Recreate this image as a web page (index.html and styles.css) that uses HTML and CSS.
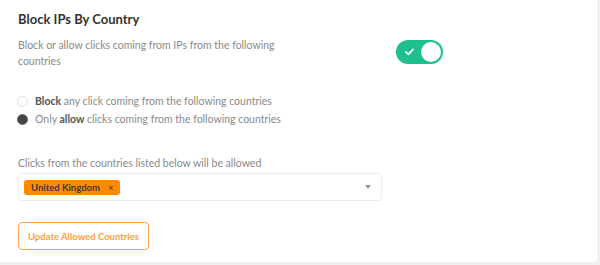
FILE: index.html
```html
<!DOCTYPE html>
<html>
<head>
<meta charset="utf-8">
<link rel="stylesheet" href="styles.css">
</head>
<body>
<div class="card">
  <h2 class="title">Block IPs By Country</h2>
  <div class="top-row">
    <p class="desc">Block or allow clicks coming from IPs from the following countries</p>
    <div class="toggle">
      <svg class="check" width="9" height="8" viewBox="0 0 9 8"><path d="M1 4.2 L3.4 6.4 L8 1.4" fill="none" stroke="#fff" stroke-width="1.8" stroke-linecap="round" stroke-linejoin="round"/></svg>
      <span class="knob"></span>
    </div>
  </div>
  <div class="radios">
    <label class="radio"><span class="dot"></span><span><b>Block</b> any click coming from the following countries</span></label>
    <label class="radio"><span class="dot on"></span><span>Only <b>allow</b> clicks coming from the following countries</span></label>
  </div>
  <div class="field-label">Clicks from the countries listed below will be allowed</div>
  <div class="select">
    <span class="tag">United Kingdom <span class="x">×</span></span>
    <span class="caret"></span>
  </div>
  <button class="btn">Update Allowed Countries</button>
</div>
</body>
</html>
```
FILE: styles.css
```css
html, body {
  margin: 0;
  padding: 0;
}
body {
  background: #f1f1f1;
  font-family: Lato, "Noto Sans", sans-serif;
  width: 600px;
  height: 265px;
  overflow: hidden;
}
.card {
  background: #fff;
  width: 597px;
  height: 262px;
  border-bottom-right-radius: 4px;
  box-sizing: border-box;
  padding: 11px 18px 0 18px;
}
.title {
  margin: 0;
  font-size: 13px;
  font-weight: 700;
  color: #333;
  line-height: 16px;
}
.top-row {
  display: flex;
  align-items: flex-start;
  margin-top: 10px;
}
.desc {
  margin: 0;
  width: 262px;
  font-size: 10.5px;
  line-height: 16px;
  color: #8a8a8a;
}
.toggle {
  margin-left: 116px;
  margin-top: 3px;
  width: 47px;
  height: 24px;
  border-radius: 12px;
  background: #1fc08e;
  box-sizing: border-box;
  display: flex;
  align-items: center;
  padding: 0 2px 0 9px;
}
.check {
  display: block;
}
.knob {
  margin-left: auto;
  width: 20px;
  height: 20px;
  border-radius: 50%;
  background: #fff;
}
.radios {
  margin-top: 26px;
  display: flex;
  flex-direction: column;
  gap: 5px;
}
.radio {
  display: flex;
  align-items: center;
  gap: 7px;
  font-size: 10.5px;
  line-height: 13px;
  color: #8a8a8a;
  margin-left: -1px;
}
.radio b {
  color: #555;
}
.dot {
  width: 11px;
  height: 11px;
  border-radius: 50%;
  border: 1px solid #ddd;
  box-sizing: border-box;
  background: #fff;
}
.dot.on {
  background: #444;
  border-color: #666;
}
.field-label {
  margin-top: 31px;
  font-size: 10.5px;
  line-height: 13px;
  color: #8a8a8a;
}
.select {
  margin-top: 3px;
  width: 364px;
  height: 28px;
  box-sizing: border-box;
  border: 1px solid #ececec;
  border-radius: 4px;
  display: flex;
  align-items: center;
  padding: 0 10px 0 5px;
}
.tag {
  background: #ff8a00;
  color: #3a3a3a;
  font-weight: 700;
  font-size: 9.5px;
  line-height: 15px;
  height: 15px;
  padding: 0 6px 0 7px;
  border-radius: 3px;
}
.tag .x {
  font-weight: 400;
  margin-left: 6px;
  font-size: 9px;
}
.caret {
  margin-left: auto;
  width: 0;
  height: 0;
  border-left: 3.5px solid transparent;
  border-right: 3.5px solid transparent;
  border-top: 4px solid #999;
}
.btn {
  display: block;
  margin-top: 21px;
  width: 131px;
  height: 28px;
  border: 1.5px solid #ffa64d;
  border-radius: 4px;
  background: #fff;
  color: #ffa040;
  font-family: Lato, "Noto Sans", sans-serif;
  font-weight: 700;
  font-size: 9.5px;
  padding: 0;
}
```
